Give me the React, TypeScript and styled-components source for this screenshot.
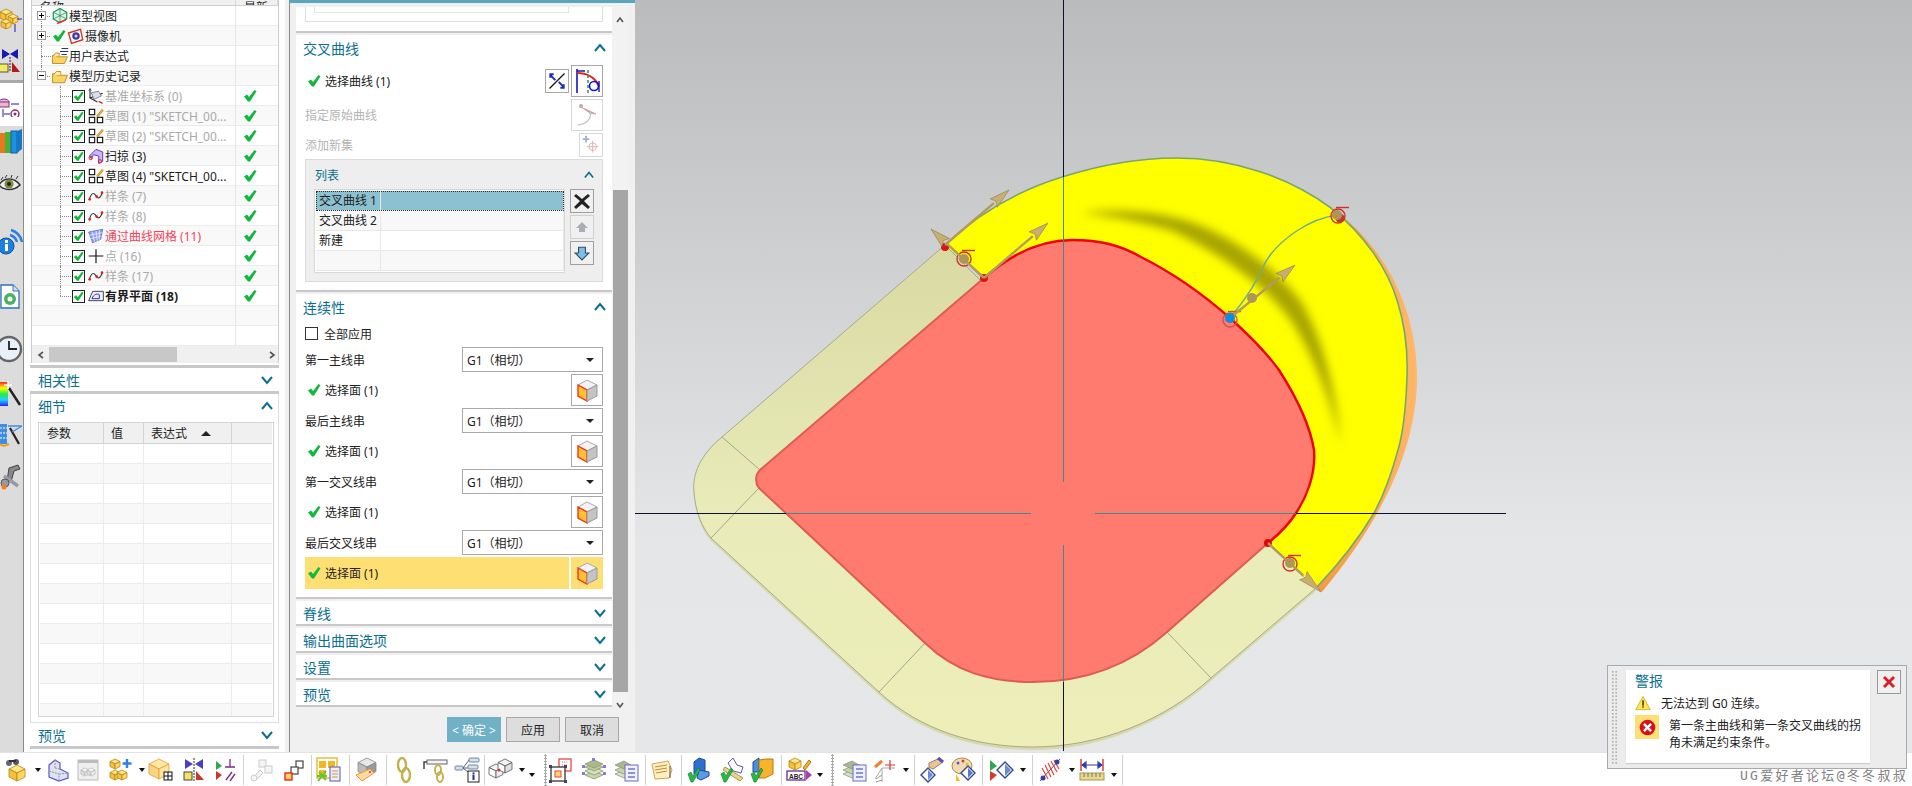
import React from "react";
import styled, { createGlobalStyle } from "styled-components";

const Global = createGlobalStyle`
  html, body { margin: 0; padding: 0; overflow: hidden; background: #fff; }
  * { box-sizing: border-box; }
  #root { font-family: "Noto Sans", "Noto Sans CJK SC", sans-serif; font-size: 12px; color: #222; }
`;

const TEAL = "#0b6f8f";

const Root = styled.div`
  position: relative; width: 1912px; height: 786px; display: flex; flex-direction: column; overflow: hidden;
`;
const Main = styled.div`display: flex; height: 752px;`;

/* ---------- icon base ---------- */
const Svg = styled.svg<{ $s?: number }>`
  display: block; flex: none; width: ${p => p.$s ?? 24}px; height: ${p => p.$s ?? 24}px;
`;
const Ic: React.FC<{ s?: number; v?: string; children?: React.ReactNode }> = ({ s = 24, v, children }) => (
  <Svg $s={s} viewBox={v ?? (s > 24 ? `0 0 ${s} ${s}` : "0 0 24 24")}>{children}</Svg>
);
const Cube: React.FC<{ x: number; y: number; r: number; t?: string; l?: string; f?: string; st?: string }> = ({ x, y, r, t = "#ffe680", l = "#f6c03c", f = "#ffd75e", st = "#b5851a" }) => (
  <g stroke={st} strokeWidth="0.8" strokeLinejoin="round">
    <path fill={t} d={`M${x} ${y - r}L${x + r} ${y - r / 2}L${x} ${y}L${x - r} ${y - r / 2}Z`} />
    <path fill={l} d={`M${x - r} ${y - r / 2}L${x} ${y}L${x} ${y + r}L${x - r} ${y + r / 2}Z`} />
    <path fill={f} d={`M${x + r} ${y - r / 2}L${x} ${y}L${x} ${y + r}L${x + r} ${y + r / 2}Z`} />
  </g>
);
const Tick = () => <path fill="#12b83c" d="M1 7.5L4 5.5L6 8L11.5 1L13.5 2.2L7 12.5H5Z" />;
const CheckMark = () => <Ic s={14} v="0 0 14 14"><Tick /></Ic>;

/* ---------- tree icons ---------- */
const IcModelView = () => <Ic s={18}><path d="M12 2L21 7V16L12 21L3 16V7Z" fill="#dff3e6" stroke="#14905a" strokeWidth="1.6" /><path d="M12 2V21M3 7L21 16M21 7L3 16" stroke="#14905a" /><path d="M8 22L20 17" stroke="#e33" strokeWidth="2" /></Ic>;
const IcCamera = () => <Ic s={18}><path d="M2 8L18 3L21 17L6 22Z" fill="#fff" stroke="#d8301c" strokeWidth="1.8" /><circle cx="12" cy="12" r="5" fill="#3a3aa8" /><circle cx="12" cy="12" r="2" fill="#ddd" /></Ic>;
const IcFolder = () => <Ic s={18}><path d="M2 9V21H18L22 11H8L6 9Z" fill="#fbd35f" stroke="#a87a10" /><path d="M3 11L7 6H13V10" fill="#ffe9a4" stroke="#a87a10" /></Ic>;
const IcFolderExpr = () => <Ic s={18}><path d="M2 11V22H18L22 13H8L6 11Z" fill="#fbd35f" stroke="#a87a10" /><path d="M3 12L6 8H11V12" fill="#ffe9a4" stroke="#a87a10" /><path d="M14 2H23M12 6H23M14 10H21" stroke="#2430a0" strokeWidth="1.6" /></Ic>;
const IcDatum = () => <Ic s={16}><path d="M3 1V15L14 21M3 15L22 8" stroke="#222" strokeWidth="1.6" fill="none" /><path d="M5 7L16 5L20 12L9 17Z" fill="#dde" stroke="#555" /><path d="M3 1L1 4M3 1L5 4" stroke="#22a" /><path d="M16 20L22 23" stroke="#d22" strokeWidth="2" /></Ic>;
const IcSketch = () => <Ic s={16}><rect x="2" y="2" width="8" height="8" fill="#fff" stroke="#111" strokeWidth="1.7" /><rect x="2" y="14" width="8" height="8" fill="#fff" stroke="#111" strokeWidth="1.7" /><rect x="14" y="14" width="8" height="8" fill="#fff" stroke="#111" strokeWidth="1.7" /><path d="M13 12L21 2L23 4L15 13Z" fill="#f2b632" stroke="#a87a10" /></Ic>;
const IcSweep = () => <Ic s={16}><path d="M2 12L12 2L22 6V20L16 23V12L8 10L5 16Z" fill="#c9b8f2" stroke="#5a3ed0" strokeWidth="1.5" /><circle cx="4" cy="15" r="2.5" fill="none" stroke="#e22" strokeWidth="1.5" /><circle cx="18" cy="20" r="2.5" fill="none" stroke="#e22" strokeWidth="1.5" /></Ic>;
const IcSpline = () => <Ic s={16}><path d="M2 17C6 4 10 8 13 13S20 12 22 6" fill="none" stroke="#333" strokeWidth="1.7" /><circle cx="2.5" cy="17" r="2" fill="#d22" /><circle cx="13" cy="13" r="2" fill="#d22" /><circle cx="21" cy="7" r="2" fill="#d22" /></Ic>;
const IcMesh = () => <Ic s={16}><path d="M1 6L22 2L19 17L7 22Z" fill="#8fa2ef" stroke="#3c50c8" /><path d="M6 5L10 21M12 4L14 20M17 3L17 18M2 11L21 7M4 16L20 12" stroke="#fff" /></Ic>;
const IcPoint = () => <Ic s={16}><path d="M12 2V23M1 12H23" stroke="#111" strokeWidth="1.7" /></Ic>;
const IcPlane = () => <Ic s={16}><path d="M1 19L7 5H23V19Z" fill="#eef" stroke="#445" strokeWidth="1.5" /><path d="M6 16C8 9 15 8 17 10V16Z" fill="none" stroke="#33a" strokeWidth="1.5" /></Ic>;

/* ---------- navigator ---------- */
const Rail = styled.div`
  width: 24px; flex: none; background: #dcdcdc; border-right: 1px solid #8c8c8c; overflow: hidden;
  display: flex; flex-direction: column;
`;
const RailItem = styled.div<{ $h: number; $on?: boolean }>`
  height: ${p => p.$h}px; flex: none; display: flex; align-items: center; margin-left: ${p => (p.$on ? "0" : "-6px")};
  background: ${p => (p.$on ? "#fff" : "transparent")};
`;
const RailRule = styled.div`height: 3px; flex: none; background: #a8a8a8;`;

const Nav = styled.div`width: 261px; flex: none; background: #fff; padding-left: 7px; display: flex; flex-direction: column;`;
const TreeBox = styled.div`width: 248px; height: 363px; flex: none; border: 1px solid #ccc; border-top: 0; display: flex; flex-direction: column;`;
const TreeHead = styled.div`
  height: 6px; flex: none; display: grid; grid-template-columns: 204px 1fr; background: #f0f0f0; overflow: hidden;
  border-bottom: 1px solid #d0d0d0; font-size: 12px;
`;
const HeadCell = styled.div`display: flex; align-items: flex-end; padding-left: 8px; line-height: 16px; border-right: 1px solid #d8d8d8; & > span { display: block; }`;
const TreeRow = styled.div<{ $alt: boolean }>`
  height: 20px; flex: none; display: grid; grid-template-columns: 204px 1fr; border-bottom: 1px solid #ececec;
  background: ${p => (p.$alt ? "#f9f9f9" : "#fff")};
`;
const TreeMain = styled.div`display: flex; align-items: center; border-right: 1px solid #e6e6e6; min-width: 0; white-space: nowrap; height: 20px;`;
const TreeFlag = styled.div`display: flex; align-items: center; padding-left: 7px;`;
const Guide = styled.div<{ $w: number; $x: number; $end?: boolean; $h?: number }>`
  position: relative; flex: none; width: ${p => p.$w}px; height: 20px;
  &::before { content: ""; position: absolute; left: ${p => p.$x}px; top: 0; height: ${p => (p.$end ? "10px" : "20px")}; border-left: 1px dotted #888; }
  &::after { content: ""; position: absolute; left: ${p => p.$x}px; top: 10px; width: ${p => p.$h ?? 0}px; border-top: 1px dotted #888; }
`;
const Expander = styled.span`
  position: absolute; left: 5px; top: 5px; width: 9px; height: 9px; border: 1px solid #999; background: #fff; z-index: 1;
  &::before { content: ""; position: absolute; left: 1px; top: 3px; width: 5px; height: 1px; background: #000; }
`;
const Plus = styled(Expander)`
  &::after { content: ""; position: absolute; left: 3px; top: 1px; width: 1px; height: 5px; background: #000; }
`;
const CheckBox = styled.span`
  width: 13px; height: 13px; flex: none; border: 1px solid #222; background: #fff; display: flex; align-items: center; justify-content: center; margin-right: 2px;
`;
const IconSlot = styled.span<{ $w: number }>`width: ${p => p.$w}px; flex: none; display: flex; justify-content: center;`;
const TreeText = styled.span<{ $tone?: string; $bold?: boolean }>`
  font-size: 12px; font-weight: ${p => (p.$bold ? 700 : 400)};
  color: ${p => (p.$tone === "dim" ? "#a9a9a9" : p.$tone === "red" ? "#f4455c" : "#1c1c1c")};
`;
const Hscroll = styled.div`height: 17px; margin-top: auto; flex: none; background: #f0f0f0; display: flex; align-items: center; justify-content: space-between; padding: 0 2px 0 5px;`;
const HThumb = styled.div`width: 128px; height: 15px; background: #c8c8c8; margin-left: 4px; margin-right: auto;`;
const ThickRule = styled.div<{ $top?: number }>`height: 3px; flex: none; width: 249px; margin-left: -1px; margin-top: ${p => p.$top ?? 0}px; background: #c8c8c8;`;
const NavTitle = styled.div<{ $h: number }>`
  height: ${p => p.$h}px; flex: none; display: flex; align-items: center; justify-content: space-between; padding: 0 6px 0 7px;
  color: ${TEAL}; font-size: 14px; width: 248px;
`;
const DetailBox = styled.div`
  width: 249px; margin-left: -1px; height: 329px; flex: none; border: 1px solid #ddd; border-top: 0; display: flex; flex-direction: column;
`;
const ParamTable = styled.div`width: 236px; height: 295px; margin: 4px 0 0 7px; border: 1px solid #d4d4d4; padding: 0 1px; overflow: hidden; flex: none;`;
const COLS = "64px 40px 88px 41px";
const ParamHead = styled.div`height: 21px; display: grid; grid-template-columns: ${COLS}; background: #f0f0f0; border-bottom: 1px solid #d4d4d4;`;
const ParamHeadCell = styled.div`border-right: 1px solid #d4d4d4; padding-left: 7px; display: flex; align-items: center; justify-content: space-between; padding-right: 20px; &:last-child { border: 0; }`;
const ParamRow = styled.div<{ $alt: boolean }>`
  height: 20px; display: grid; grid-template-columns: ${COLS}; border-bottom: 1px solid #ececec; background: ${p => (p.$alt ? "#f8f8f8" : "#fff")};
`;
const ParamCell = styled.div`border-right: 1px solid #ececec; &:last-child { border: 0; }`;
const SortUp = styled.span`width: 0; height: 0; border-left: 5px solid transparent; border-right: 5px solid transparent; border-bottom: 5px solid #222;`;

const Chevron: React.FC<{ up?: boolean; small?: boolean }> = ({ up, small }) => (
  <Ic s={small ? 10 : 12} v="0 0 12 12">
    <path d={up ? "M1 9L6 3L11 9" : "M1 3L6 9L11 3"} fill="none" stroke={TEAL} strokeWidth="2" />
  </Ic>
);
const Arr: React.FC<{ d: string }> = ({ d }) => (
  <Ic s={8} v="0 0 8 8"><path d={d} fill="none" stroke="#555" strokeWidth="1.6" /></Ic>
);

/* ---------- dialog ---------- */
const Dialog = styled.div`width: 350px; flex: none; background: #f0f0f0; padding-left: 4px; display: flex;`;
const DialogInner = styled.div`flex: 1; border-left: 1px solid #8a8a8a; border-top: 3px solid #5aa5bd; padding: 4px 0 0 6px; display: flex; flex-direction: column;`;
const DialogBody = styled.div`display: flex; height: 700px; flex: none;`;
const Sections = styled.div`width: 316px; flex: none; display: flex; flex-direction: column; gap: 2px;`;
const Section = styled.div<{ $h?: number }>`
  background: #fff; border-bottom: 2px solid #c8c8c8; flex: none; ${p => p.$h && `height:${p.$h}px;`}
`;
const SectionTitle = styled.div<{ $h?: number }>`
  height: ${p => p.$h ?? 26}px; display: flex; align-items: center; justify-content: space-between; padding: 0 6px 0 7px; color: ${TEAL}; font-size: 14px;
`;
const SectionBody = styled.div<{ $t: number }>`padding: ${p => p.$t}px 9px 8px 9px; display: flex; flex-direction: column; gap: 2px;`;
const CutBox = styled.div`margin: 0 9px; height: 15px; border: 1px solid #ddd; border-top: 0; padding: 0 0 4px 8px;`;
const CutInner = styled.div`width: 255px; height: 6px; border: 1px solid #e4e4e4; border-top: 0;`;
const Row = styled.div<{ $h: number }>`
  height: ${p => p.$h}px; display: flex; align-items: center; justify-content: space-between;
`;
const LabelGroup = styled.div<{ $on?: boolean; $dim?: boolean; $plain?: boolean }>`
  display: flex; align-items: center; gap: ${p => (p.$plain ? 6 : 4)}px; height: 100%; flex: 1;
  padding-left: ${p => (p.$dim || p.$plain ? 0 : "2px")};
  color: ${p => (p.$dim ? "#b4b4b4" : "#222")};
  background: ${p => (p.$on ? "#fedf73" : "transparent")};
  margin-right: ${p => (p.$on ? "2px" : 0)};
`;
const IconBtn = styled.div<{ $s: number; $on?: boolean; $dim?: boolean }>`
  width: ${p => p.$s}px; height: ${p => p.$s}px; flex: none; display: flex; align-items: center; justify-content: center;
  border: 1px solid ${p => (p.$on ? "#fedf73" : p.$dim ? "#d8d8d8" : "#a8a8a8")};
  background: ${p => (p.$on ? "#fedf73" : "#fff")};
`;
const BtnPair = styled.div`display: flex; align-items: center; gap: 2px;`;
const ListGroup = styled.div`height: 123px; background: #eee; border: 1px solid #dcdcdc; padding: 0 8px;`;
const ListTitle = styled.div`height: 29px; display: flex; align-items: center; justify-content: space-between; color: ${TEAL}; font-size: 12px; & > span:first-child { padding-left: 1px; }`;
const ListWrap = styled.div`display: flex; gap: 5px;`;
const ListTable = styled.div`width: 251px; height: 84px; background: #fff; border: 1px solid #d8d8d8; padding: 1px 0 0 1px;`;
const ListRow = styled.div<{ $sel?: boolean; $alt?: boolean }>`
  height: 20px; display: grid; grid-template-columns: 65px 1fr; border-bottom: 1px solid #e8e8e8; line-height: 19px;
  background: ${p => (p.$sel ? "#8bc1d1" : p.$alt ? "#f8f8f8" : "#fff")};
  ${p => p.$sel && "outline: 1px dotted #333; outline-offset: -1px;"}
  & > span { padding-left: 3px; border-right: 1px solid #e8e8e8; white-space: nowrap; }
`;
const ListBtns = styled.div`display: flex; flex-direction: column; gap: 2px;`;
const SmallBtn = styled.div<{ $dim?: boolean }>`
  width: 24px; height: 24px; display: flex; align-items: center; justify-content: center; background: #f0f0f0;
  border: 1px solid ${p => (p.$dim ? "#d0d0d0" : "#a0a0a0")};
`;
const TickBox = styled.span`width: 13px; height: 13px; flex: none; border: 1px solid #333; background: #fff;`;
const Select = styled.div`
  width: 141px; height: 25px; border: 1px solid #aaa; background: #fff; display: flex; align-items: center; justify-content: space-between; padding: 0 8px 0 4px;
  &::after { content: ""; width: 0; height: 0; border-left: 4px solid transparent; border-right: 4px solid transparent; border-top: 4px solid #222; }
`;
const VScroll = styled.div`width: 16px; flex: none; height: 701px; display: flex; flex-direction: column; align-items: center; background: #f2f2f2; margin-top: -3px;`;
const VEnd = styled.div<{ $h: number; $at: string }>`height: ${p => p.$h}px; width: 100%; display: flex; align-items: ${p => p.$at}; padding: 12px 0 0; justify-content: center; flex: none;`;
const VThumb = styled.div`width: 15px; height: 502px; margin-left: 1px; flex: none; background: #a6a6a6;`;
const Footer = styled.div`display: flex; justify-content: flex-end; gap: 5px; padding: 10px 16px 0 0;`;
const Btn = styled.div<{ $primary?: boolean }>`
  width: 54px; height: 25px; display: flex; align-items: center; justify-content: center;
  background: ${p => (p.$primary ? "#70b1c8" : "#ddd")}; color: ${p => (p.$primary ? "#fff" : "#222")};
  border: 1px solid ${p => (p.$primary ? "#70b1c8" : "#a8a8a8")};
`;

/* dialog icons */
const IcFace = () => <Ic s={24}><path d="M12 2L22 7L12 12L3 7Z" fill="#f4f2f4" stroke="#aaa" /><path d="M3 7L12 12V23L3 18Z" fill="#ffc22e" stroke="#f0341c" strokeWidth="1.4" /><path d="M22 7L12 12V23L22 18Z" fill="#c4c4c4" stroke="#999" /></Ic>;
const IcCross = () => <Ic s={20}><path d="M3 21L21 3" stroke="#111" strokeWidth="1.5" /><path d="M4 5L10 11M8 4L4 4L4 8" stroke="#1c2db4" strokeWidth="2.4" fill="none" /><path d="M20 19L14 13M16 20H20V16" stroke="#1c2db4" strokeWidth="2.4" fill="none" /></Ic>;
const IcCurveRed = () => <Ic s={30}><path d="M5 3V27" stroke="#1414c8" strokeWidth="1.6" /><path d="M5 5H13" stroke="#1414c8" strokeWidth="1.5" /><path d="M5 7C15 7 22 10 27 20" fill="none" stroke="#e8231a" strokeWidth="2.2" /><path d="M16 4V28" stroke="#14876a" strokeDasharray="3 2" strokeWidth="1.4" /><circle cx="22" cy="20" r="4.500" fill="none" stroke="#1414c8" strokeWidth="1.6" /><path d="M27 15V26" stroke="#1414c8" strokeWidth="1.4" /></Ic>;
const IcCurveDim = () => <Ic s={26}><circle cx="7" cy="4" r="2" fill="#c9a6a6" /><path d="M7 5L22 12L15 11" fill="#c9a6a6" stroke="#c9a6a6" /><path d="M16 10C18 17 12 22 4 23" fill="none" stroke="#c8c8c8" strokeWidth="1.4" /></Ic>;
const IcAddSet = () => <Ic s={20}><path d="M2 5H10M6 1V9" stroke="#a4aed0" strokeWidth="2.2" /><circle cx="14" cy="14" r="4.5" fill="none" stroke="#d8a8a0" /><path d="M14 7V21M7 14H21" stroke="#d8a8a0" /></Ic>;
const IcX = () => <Ic s={18} v="0 0 18 18"><path d="M3 2L9 7L15 2L17 4L11 9L17 15L15 17L9 12L3 17L1 15L7 9L1 4Z" fill="#222" /></Ic>;
const IcUp = () => <Ic s={14} v="0 0 14 14"><path d="M7 2L13 8H10V12H4V8H1Z" fill="#a8b0b4" /></Ic>;
const IcDown = () => <Ic s={16} v="0 0 14 14"><path d="M4 2H10V7H13L7 13L1 7H4Z" fill="#7cc0e4" stroke="#3a4a6c" /></Ic>;

/* ---------- viewport ---------- */
const Viewport = styled.div`
  flex: 1; min-width: 0; background: linear-gradient(180deg, #b9bbbc 0%, #d2d3d4 40%, #e5e6e8 72%, #e6e7e9 100%);
`;
const Scene = styled.svg`display: block; width: 1277px; height: 752px;`;

const OUTER = "M945 245C980 212 1020 190 1062 177C1100 165 1140 158 1176 158C1235 158 1290 178 1331 208C1365 235 1388 270 1397 300C1405 325 1408 350 1407 377C1406 405 1404 430 1398 450C1392 472 1384 495 1374 513C1358 540 1338 565 1316 588";
const RED_CURVE = "M984 278C1010 255 1040 240 1072 240C1100 240 1120 245 1141 257C1175 274 1205 296 1230 318C1250 336 1266 352 1279 370C1295 395 1310 425 1314 450C1316 475 1306 498 1296 513C1288 526 1278 535 1268 543";
const RED_BACK = "C1278 535 1288 526 1296 513C1306 498 1316 475 1314 450C1310 425 1295 395 1279 370C1266 352 1250 336 1230 318C1205 296 1175 274 1141 257C1120 245 1100 240 1072 240C1040 240 1010 255 984 278Z";
const RED_REST = "L1167 632C1130 665 1085 682 1033 682C990 682 955 672 925 643L759 488C755 483 755 475 760 470Z";
const PALE = "M945 245L722 437C700 455 692 475 694 492C695 510 702 528 711 538L879 692C920 730 975 747 1033 747C1100 747 1165 720 1211 678L1316 588L1000 300Z";

const Arrow: React.FC<{ a: number[]; b: number[]; head?: number }> = ({ a, b, head = 20 }) => {
  const dx = b[0] - a[0], dy = b[1] - a[1], len = Math.hypot(dx, dy), ux = dx / len, uy = dy / len;
  const bx = b[0] - ux * head, by = b[1] - uy * head;
  return (
    <g>
      <path d={`M${a[0]} ${a[1]}L${bx} ${by}`} stroke="#b39a5e" strokeWidth="2.4" />
      <path d={`M${b[0]} ${b[1]}L${bx - uy * 5.5} ${by + ux * 5.5}L${bx + ux * 3} ${by + uy * 3}L${bx + uy * 5.5} ${by - ux * 5.5}Z`} fill="#c8ae70" stroke="#8f7a48" strokeWidth="0.6" />
    </g>
  );
};
const Handle: React.FC<{ x: number; y: number; c?: string }> = ({ x, y, c = "#cf2f2f" }) => (
  <g>
    <circle cx={x} cy={y} r="7" fill="none" stroke={c} strokeWidth="1.4" />
    <path d={`M${x - 2} ${y - 8.5}H${x + 11}`} stroke={c} strokeWidth="1.4" />
  </g>
);
const Ball: React.FC<{ x: number; y: number; r?: number; c?: string }> = ({ x, y, r = 5, c = "#ae9558" }) => <circle cx={x} cy={y} r={r} fill={c} />;

const SceneArt = () => (
  <Scene viewBox="635 0 1277 752">
    <defs>
      <linearGradient id="pale" x1="0" y1="0" x2="0" y2="1"><stop offset="0" stopColor="#d9d9a2" /><stop offset="0.55" stopColor="#e9ecb9" /><stop offset="1" stopColor="#edeeb8" /></linearGradient>
      <linearGradient id="rim" x1="0" y1="0" x2="1" y2="0"><stop offset="0" stopColor="#f29a45" /><stop offset="1" stopColor="#ffb766" /></linearGradient>
      <filter id="blur" x="-30%" y="-30%" width="160%" height="160%"><feGaussianBlur stdDeviation="5" /></filter>
      <clipPath id="yc"><path d={`${OUTER}L1268 543${RED_BACK}`} /></clipPath>
    </defs>
    <path d={PALE} fill="#d8d9a8" transform="translate(0 3)" />
    <path d={PALE} fill="url(#pale)" stroke="#a9a98e" strokeWidth="1" />
    <path d="M722 437L760 470M759 488L711 538M925 643L879 692M1167 632L1211 678" stroke="#a3a58e" strokeWidth="1" fill="none" />
    <path d="M1331 208C1385 245 1417 310 1417 377C1417 440 1390 510 1322 592L1316 588L1340 400Z" fill="url(#rim)" />
    <path d={`${OUTER}L1268 543${RED_BACK}`} fill="#ffff00" />
    <g clipPath="url(#yc)">
      <path d="M1080 213C1120 208 1155 212 1185 220C1225 232 1270 262 1300 300C1322 335 1336 390 1341 445C1332 405 1316 360 1292 322C1270 292 1235 262 1175 232C1145 222 1110 216 1080 213Z" fill="#a8a400" filter="url(#blur)" />
    </g>
    <path d={OUTER} fill="none" stroke="#7ba56e" strokeWidth="1.6" />
    <path d={`${RED_CURVE}${RED_REST}`} fill="#ff7b6f" />
    <path d="M1268 543L1167 632C1130 665 1085 682 1033 682C990 682 955 672 925 643L759 488C755 483 755 475 760 470L984 278" fill="none" stroke="#dc5c54" strokeWidth="2" />
    <path d={RED_CURVE} fill="none" stroke="#f20000" strokeWidth="2.4" />
    {/* crosshair */}
    <path d="M1063.5 0V751" stroke="#101030" strokeWidth="1" />
    <path d="M635 513.5H1506" stroke="#101030" strokeWidth="1" />
    <rect x="1031" y="482" width="64" height="63" fill="#ff7b6f" />
    <path d="M1063.5 177V482M1063.5 545V682" stroke="#3f8c8c" strokeWidth="1" />
    <path d="M786 513.5H1031M1095 513.5H1296" stroke="#3f8c8c" strokeWidth="1" />
    {/* green guide */}
    <path d="M1230 318C1245 300 1258 280 1265 263C1278 240 1310 218 1338 215" fill="none" stroke="#6fae8a" strokeWidth="1.5" />
    {/* handles */}
    <Handle x={964} y={259} />
    <Handle x={1230} y={320} c="#d05050" />
    <Handle x={1338} y={216} />
    <Handle x={1290} y={564} />
    <circle cx="945" cy="247" r="4" fill="#d81414" />
    <circle cx="984" cy="278" r="4" fill="#d81414" />
    <circle cx="1268" cy="543" r="4" fill="#e80000" />
    <circle cx="1340" cy="218" r="4.500" fill="#c0392b" />
    <Arrow a={[945, 245]} b={[1009, 190]} />
    <Arrow a={[984, 278]} b={[1048, 223]} />
    <Arrow a={[984, 278]} b={[931, 229]} />
    <Arrow a={[1230, 318]} b={[1295, 265]} />
    <Arrow a={[1268, 543]} b={[1321, 592]} head={24} />
    <Ball x={964} y={259} />
    <Ball x={1252} y={298} />
    <Ball x={1337} y={215} />
    <Ball x={1290} y={563} />
    <circle cx="1230" cy="318" r="5" fill="#0a8fe0" />
  </Scene>
);

/* ---------- alert ---------- */
const Alert = styled.div`
  position: absolute; left: 1607px; top: 665px; width: 300px; height: 104px; background: #ececec; border: 1px solid #aaa;
  display: flex; padding: 4px 5px 4px 3px;
`;
const Grip = styled.div`
  width: 7px; flex: none; margin-right: 8px; background-image: radial-gradient(#b4b4b4 1.1px, transparent 1.2px); background-size: 3.5px 3.5px;
`;
const AlertCard = styled.div`width: 244px; height: 93px; background: #fff; padding: 2px 0 0 9px; box-shadow: 0 1px 1px #ccc; flex: none;`;
const AlertTitle = styled.div`color: ${TEAL}; font-size: 14px; line-height: 18px; margin-bottom: 3px;`;
const AlertLine = styled.div`display: flex; align-items: center; gap: 10px; height: 20px; margin-bottom: 2px;`;
const AlertError = styled.div`display: flex; gap: 10px; align-items: flex-start;`;
const ErrBadge = styled.div`width: 24px; height: 24px; flex: none; background: #fedf73; display: flex; align-items: center; justify-content: center;`;
const ErrText = styled.div`line-height: 17px; padding-top: 2px; width: 196px;`;
const CloseBtn = styled.div`width: 24px; height: 24px; margin-left: 7px; border: 1px solid #999; display: flex; align-items: center; justify-content: center; background: #f0f0f0; flex: none;`;
const Watermark = styled.div`
  position: absolute; right: 4px; bottom: 2px; font-family: "DejaVu Sans Mono", "Noto Sans CJK SC", monospace; font-size: 13px; line-height: 16px; color: #808080; letter-spacing: 2.3px; white-space: nowrap;
`;

/* ---------- toolbar ---------- */
const Toolbar = styled.div`height: 34px; flex: none; background: #fff; border-top: 1px solid #e4e4e4; display: flex; align-items: center;`;
const ToolSlot = styled.div<{ $w: number; $ml: number }>`
  width: ${p => p.$w}px; margin-left: ${p => p.$ml}px; flex: none; display: flex; align-items: center; justify-content: center;
`;
const Caret = styled.span<{ $low?: boolean }>`
  width: 0; height: 0; border-left: 3.5px solid transparent; border-right: 3.5px solid transparent; border-top: 4px solid #111;
  margin-top: ${p => (p.$low ? "10px" : "0")};
`;
const Sep = styled.span`width: 1px; height: 30px; background: #d0d0d0;`;
const DotSep = styled.span`width: 3px; height: 32px; background-image: radial-gradient(#aaa 1px, transparent 1.1px); background-size: 3px 3px;`;

const Y = "#ffd75e";
function IcLayers() {
  return <Ic s={26}><g stroke="#8a9a6a" strokeWidth="0.8"><path d="M4 18L13 14L22 18L13 22Z" fill="#c8d4b0" /><path d="M4 14L13 10L22 14L13 18Z" fill="#d8e0c4" /><path d="M4 10L13 6L22 10L13 14Z" fill="#bccaa0" /><path d="M4 7L13 3L22 7L13 11Z" fill="#aab890" /></g><g fill="#8a7ad8"><rect x="1" y="8" width="3" height="3" /><rect x="22" y="8" width="3" height="3" /><rect x="11" y="1" width="3" height="3" /><rect x="1" y="15" width="3" height="3" /><rect x="22" y="15" width="3" height="3" /></g></Ic>;
}
function IcLayersList() {
  return <Ic s={26}><g stroke="#8a9a7a" strokeWidth="0.8"><path d="M2 17L11 13L18 17L11 21Z" fill="#d8e0c4" /><path d="M2 13L11 9L18 13L11 17Z" fill="#c8d4b0" /><path d="M2 8L11 4L18 8L11 12Z" fill="#aab890" /></g><rect x="12" y="8" width="13" height="16" fill="#f0f0ff" stroke="#6a6ac8" /><path d="M15 12H22M15 16H22M15 20H22" stroke="#6a7ac8" strokeWidth="1.400" /></Ic>;
}
const tools: { c: number; n: React.ReactNode; w?: number }[] = [
  { c: 16, n: <Ic><Cube x={13} y={15} r={8} /><circle cx="5" cy="5" r="3" fill="#667" /><circle cx="12" cy="4" r="3" fill="#556" /><path d="M5 3H12" stroke="#333" strokeWidth="2" /></Ic> },
  { c: 38, w: 7, n: <Caret /> },
  { c: 58, n: <Ic><path d="M3 7L9 2L14 5V11L22 15V20L13 23L3 19Z" fill="#dfe2f2" stroke="#5a55c8" strokeWidth="1.2" /><path d="M3 13L13 16V23M13 16L22 15M9 2V10M9 10L14 11" stroke="#999" strokeDasharray="2 1" fill="none" /></Ic> },
  { c: 88, n: <Ic><rect x="2" y="2" width="20" height="20" fill="#eee" stroke="#bbb" /><rect x="2" y="2" width="20" height="3" fill="#bbb" /><Cube x={9} y={14} r={4} t="#f8f8f8" l="#ddd" f="#eee" st="#bbb" /><Cube x={15} y={14} r={4} t="#f8f8f8" l="#ddd" f="#eee" st="#bbb" /></Ic> },
  { c: 120, n: <Ic><Cube x={7} y={6} r={5} /><Cube x={7} y={17} r={5} /><Cube x={14} y={17} r={5} /><path d="M19 1V10M14.5 5.5H23.500" stroke="#2f7fe8" strokeWidth="2.4" /></Ic> },
  { c: 142, w: 7, n: <Caret /> },
  { c: 161, n: <Ic s={26}><Cube x={11} y={12} r={10} t="#ffe9a8" l="#f7d682" f="#ffe6a0" st="#e39c30" /><rect x="16" y="15" width="8" height="8" fill="#fff" stroke="#111" /><path d="M20 15V23M16 19H24" stroke="#111" /></Ic> },
  { c: 194, n: <Ic><path d="M3 1L11 6L3 11ZM21 1L13 6L21 11Z" fill="#4c3fc4" /><path d="M12 0V24" stroke="#333" strokeDasharray="2 1" /><rect x="2" y="14" width="8" height="8" fill="#f4e45c" stroke="#444" /><path d="M14 13L22 22H14Z" fill="#c8382c" /></Ic> },
  { c: 224, n: <Ic><path d="M4 3L10 8L4 12Z" fill="#2fa84f" /><path d="M4 13L10 17L4 22Z" fill="#c8382c" /><path d="M13 9H23M18 9V1M14 22L20 14M18 23L23 16" stroke="#7a2a86" strokeWidth="1.3" /></Ic> },
  { c: 243, w: 1, n: <Sep /> },
  { c: 261, n: <Ic><g fill="#f4f4f4" stroke="#ccc"><rect x="10" y="2" width="7" height="7" /><rect x="16" y="8" width="7" height="7" /><path d="M4 20L11 12L14 15L7 22Z" /><circle cx="5" cy="20" r="3" /></g></Ic> },
  { c: 294, n: <Ic><rect x="14" y="3" width="7" height="7" fill="#fff" stroke="#444" strokeWidth="1.2" /><rect x="9" y="9" width="7" height="7" fill="#fff" stroke="#444" strokeWidth="1.2" /><rect x="3" y="15" width="7" height="7" fill={Y} stroke="#e22" strokeWidth="1.4" /></Ic> },
  { c: 311, w: 1, n: <Sep /> },
  { c: 329, n: <Ic s={26}><rect x="1" y="1" width="20" height="20" fill="#fff" stroke="#e6b82c" strokeWidth="1.4" /><rect x="3" y="4" width="7" height="7" fill="#f0b828" /><rect x="12" y="4" width="7" height="7" fill="#f0b828" /><rect x="3" y="13" width="7" height="7" fill="#f0b828" /><path d="M2 24L10 14M3 15L10 23M1 19H11" stroke="#6ac42c" strokeWidth="2" /><rect x="14" y="10" width="10" height="14" fill="#eef" stroke="#5a55a8" /><path d="M16 14H22M16 17H22M16 20H22" stroke="#c8a028" /></Ic> },
  { c: 349, w: 1, n: <Sep /> },
  { c: 367, n: <Ic s={26}><Cube x={13} y={10} r={9} t="#e8e8e8" l="#bbb" f="#999" st="#888" /><path d="M2 18L16 12L20 16L8 24Z" fill="#ffd9a0" stroke="#e89a30" /><circle cx="16" cy="15" r="1" fill="#e22" /></Ic> },
  { c: 386, w: 1, n: <Sep /> },
  { c: 404, n: <Ic s={28}><g fill="none" stroke="#c4b04c" strokeWidth="2.4"><ellipse cx="12" cy="9" rx="4" ry="7" /><ellipse cx="16" cy="19" rx="4" ry="7" /></g></Ic> },
  { c: 435, n: <Ic s={28}><rect x="6" y="4" width="20" height="4" fill="#f4f4f4" stroke="#666" /><path d="M6 6H3V13" stroke="#444" strokeWidth="1.5" fill="none" /><g fill="none" stroke="#c4b04c" strokeWidth="2"><ellipse cx="17" cy="14" rx="3" ry="5" /><ellipse cx="19" cy="21" rx="3" ry="5" /></g></Ic> },
  { c: 467, n: <Ic s={26}><rect x="15" y="1" width="10" height="4" rx="1" fill="#cfe0f4" stroke="#789" /><rect x="14" y="8" width="10" height="4" rx="1" fill="#cfe0f4" stroke="#789" /><rect x="1" y="9" width="8" height="4" rx="1" fill="#cfe0f4" stroke="#789" /><path d="M9 11H14M9 11L15 3M9 11L14 15" stroke="#567" /><rect x="14" y="14" width="11" height="11" fill="#fff" stroke="#222" /><rect x="18.500" y="18" width="2" height="5" fill="#2a2a90" /><rect x="18.500" y="15.500" width="2" height="2" fill="#2a2a90" /></Ic> },
  { c: 484, w: 1, n: <Sep /> },
  { c: 501, n: <Ic s={26}><Cube x={8} y={14} r={7} t="#f4f4f4" l="#fff" f="#eee" st="#555" /><Cube x={17} y={9} r={7} t="#f4f4f4" l="#fff" f="#e0e0e0" st="#555" /><circle cx="11" cy="13" r="1.500" fill="#d33" /></Ic> },
  { c: 522, w: 7, n: <Caret /> },
  { c: 532, w: 7, n: <Caret $low /> },
  { c: 545, w: 3, n: <DotSep /> },
  { c: 561, n: <Ic s={26}><rect x="11" y="2" width="12" height="12" fill="#fff" stroke="#e44" strokeWidth="1.3" /><path d="M14 5H20M14 8H20M14 11H20" stroke="#999" strokeDasharray="1 1" /><rect x="3" y="10" width="14" height="14" fill="#fff" stroke="#333" strokeWidth="1.3" /><rect x="7" y="14" width="6" height="6" fill={Y} stroke="#e44" /><g fill="#445"><rect x="1" y="8" width="3" height="3" /><rect x="16" y="8" width="3" height="3" /><rect x="1" y="23" width="3" height="3" /><rect x="16" y="23" width="3" height="3" /></g></Ic> },
  { c: 594, n: <IcLayers /> },
  { c: 626, n: <IcLayersList /> },
  { c: 645, w: 1, n: <Sep /> },
  { c: 662, n: <Ic><path d="M2 6L18 3L22 12L19 20L5 21Z" fill="#fff0c0" stroke="#d8a050" /><path d="M5 9L17 7M5 12L17 10M6 15L17 13" stroke="#c08830" /><path d="M20 8V20" stroke="#555" /></Ic> },
  { c: 681, w: 1, n: <Sep /> },
  { c: 699, n: <Ic s={26}><path d="M8 5L13 1L19 3V15L13 17H8Z" fill="#2f6fd0" stroke="#1c4898" /><path d="M13 13L23 15V19L15 23L11 21Z" fill="#5a9ae8" stroke="#1c4898" /><path d="M2 17L5 15L7 19L12 11L14 13L7 25H5Z" fill="#28b848" stroke="#0c7a2a" strokeWidth="0.6" /></Ic> },
  { c: 732, n: <Ic s={26}><path d="M9 6L14 1L18 8L24 10L22 16L14 14Z" fill="#fff" stroke="#5a55c8" /><path d="M6 10L24 21L21 24L4 13Z" fill="#e8d48c" stroke="#a89850" /><path d="M2 17L5 15L7 19L12 11L14 13L7 25H5Z" fill="#28b848" stroke="#0c7a2a" strokeWidth="0.6" /></Ic> },
  { c: 762, n: <Ic s={26}><path d="M4 5L10 1V15H4Z" fill="#4a90e0" stroke="#1c4898" /><path d="M10 3L17 2H24V17L16 21H10Z" fill="#f6b32c" stroke="#b87a10" /><path d="M2 17L5 15L7 19L12 11L14 13L7 25H5Z" fill="#28b848" stroke="#0c7a2a" strokeWidth="0.6" /></Ic> },
  { c: 781, w: 1, n: <Sep /> },
  { c: 799, n: <Ic s={26}><Cube x={9} y={7} r={6} /><path d="M17 11L23 3L25 5L19 13Z" fill="#f6b32c" stroke="#a87a10" /><rect x="1" y="14" width="18" height="9" fill="#fff" stroke="#6a2a96" strokeWidth="1.300" /><text x="10" y="21.500" textAnchor="middle" fontSize="6.500" fontWeight="700" fontFamily="Liberation Sans" fill="#222">ABC</text><path d="M20 13L26 18L20 23Z" fill="#b13ca8" /></Ic> },
  { c: 820, w: 7, n: <Caret $low /> },
  { c: 832, w: 3, n: <DotSep /> },
  { c: 854, n: <IcLayersList /> },
  { c: 885, n: <Ic s={26}><path d="M10 11V25M10 11H23M10 11L3 22" stroke="#aaa" strokeWidth="1" /><path d="M13 8H23M18 3V13" stroke="#d33" strokeWidth="1.200" /><path d="M3 10L10 4" stroke="#f08030" strokeWidth="3" /><path d="M4 22L10 18M4 25L10 23" stroke="#999" /></Ic> },
  { c: 906, w: 7, n: <Caret /> },
  { c: 914, w: 1, n: <Sep /> },
  { c: 932, n: <Ic s={26}><path d="M10 6L21 1L24 5L14 12L10 10Z" fill="#e8c49a" stroke="#a87a50" /><path d="M19 1L24 5" stroke="#5a4ac0" strokeWidth="3" /><path d="M9 11L16 18L9 25L2 18Z" fill="#fff" stroke="#2f4a90" strokeWidth="1.400" /><path d="M9 13L14 18L9 23Z" fill="#6a8ad8" /></Ic> },
  { c: 964, n: <Ic s={26}><ellipse cx="11" cy="9" rx="10" ry="8" fill="#f4dcb0" stroke="#a88850" /><circle cx="7" cy="6" r="1.500" fill="#3a6ad8" /><circle cx="12" cy="4" r="1.500" fill="#d83a3a" /><circle cx="16" cy="7" r="1.500" fill="#f0c020" /><path d="M17 9L24 16L17 23L10 16Z" fill="#fff" stroke="#2f4a90" strokeWidth="1.400" /><path d="M17 11L22 16L17 21Z" fill="#5a7ac8" /><path d="M5 17L9 24H5Z" fill="#f0c020" /></Ic> },
  { c: 982, w: 1, n: <Sep /> },
  { c: 1001, n: <Ic s={26}><path d="M2 3L9 9L2 14Z" fill="#2fa84f" /><path d="M2 14L9 18L2 24Z" fill="#d8382c" /><path d="M17 5L25 13L17 21L9 13Z" fill="#fff" stroke="#2f4a90" strokeWidth="1.400" /><path d="M17 7L23 13L17 19Z" fill="#6a8ad8" /></Ic> },
  { c: 1023, w: 7, n: <Caret /> },
  { c: 1032, w: 1, n: <Sep /> },
  { c: 1050, n: <Ic s={26}><path d="M3 24L23 2" stroke="#555" /><path d="M8 8L14 20M11 6L17 18M14 4L20 15M5 11L11 22M17 3L22 12" stroke="#e0423a" strokeWidth="1.200" /><circle cx="6" cy="21" r="2.500" fill="#3a3ab0" /><circle cx="20" cy="5" r="2.500" fill="#3a3ab0" /></Ic> },
  { c: 1072, w: 7, n: <Caret /> },
  { c: 1092, n: <Ic s={26}><path d="M2 2V14M24 2V14" stroke="#d8322a" strokeWidth="1.400" /><path d="M3 8H23M3 8L7 5V11ZM23 8L19 5V11Z" stroke="#2f3fb0" strokeWidth="1.200" fill="#2f3fb0" /><rect x="1" y="16" width="24" height="7" fill="#e8d88c" stroke="#a89850" /><path d="M5 16V20M9 16V20M13 16V20M17 16V20M21 16V20" stroke="#776" /></Ic> },
  { c: 1114, w: 7, n: <Caret $low /> },
  { c: 1122, w: 1, n: <Sep /> },
];

/* ---------- data ---------- */
type TreeItem = { icon: React.ReactNode; text: string; tone?: string; bold?: boolean };
const history: TreeItem[] = [
  { icon: <IcDatum />, text: "基准坐标系 (0)", tone: "dim" },
  { icon: <IcSketch />, text: "草图 (1) \"SKETCH_00...", tone: "dim" },
  { icon: <IcSketch />, text: "草图 (2) \"SKETCH_00...", tone: "dim" },
  { icon: <IcSweep />, text: "扫掠 (3)" },
  { icon: <IcSketch />, text: "草图 (4) \"SKETCH_00..." },
  { icon: <IcSpline />, text: "样条 (7)", tone: "dim" },
  { icon: <IcSpline />, text: "样条 (8)", tone: "dim" },
  { icon: <IcMesh />, text: "通过曲线网格 (11)", tone: "red" },
  { icon: <IcPoint />, text: "点 (16)", tone: "dim" },
  { icon: <IcSpline />, text: "样条 (17)", tone: "dim" },
  { icon: <IcPlane />, text: "有界平面 (18)", bold: true },
];
const continuity = ["第一主线串", "最后主线串", "第一交叉线串", "最后交叉线串"];
const closed = ["脊线", "输出曲面选项", "设置", "预览"];

const App: React.FC = () => {
  let end = 0;
  return (
    <Root>
      <Global />
      <Main>
        <Rail>
          <RailItem $h={40}><Ic s={28}><Cube x={12} y={9} r={6} /><Cube x={19} y={13} r={5} /><Cube x={12} y={18} r={5} /><path d="M23 13H29M21 18V26" stroke="#1a1ab0" /></Ic></RailItem>
          <RailItem $h={40}><Ic s={28}><path d="M8 3L16 8L8 13ZM24 3L16 8L24 13Z" fill="#1a1ab0" /><path d="M16 11V26" stroke="#222" strokeDasharray="2 1" /><rect x="5" y="18" width="9" height="8" fill="#f4ec5c" stroke="#555" /><path d="M18 16L26 26H18Z" fill="#b81818" /></Ic></RailItem>
          <RailRule />
          <RailItem $h={43} $on><Ic s={24} v="0 0 24 24"><ellipse cx="4" cy="9" rx="5" ry="3" fill="#e4b8d0" stroke="#8a2a7a" /><rect x="-1" y="9" width="10" height="5" fill="#e4b8d0" stroke="#8a2a7a" /><path d="M11 11H19M3 16V26M4 21H10" stroke="#1a1ab0" /><circle cx="15" cy="21" r="4" fill="none" stroke="#8a2a7a" strokeWidth="1.400" /><circle cx="15" cy="21" r="1.500" fill="#8a2a7a" /></Ic></RailItem>
          <RailItem $h={30}><Ic s={28}><rect x="4" y="6" width="7" height="20" fill="#e8791c" /><rect x="11" y="5" width="6" height="21" fill="#4cb034" /><rect x="17" y="4" width="6" height="22" fill="#1e90e0" stroke="#1060a0" /><path d="M23 4L28 2V22L23 26Z" fill="#1478c8" /></Ic></RailItem>
          <RailItem $h={57}><Ic s={28}><path d="M5 14C10 6 20 6 26 14C20 20 10 20 5 14Z" fill="#eee" stroke="#333" strokeWidth="1.500" /><circle cx="15" cy="13" r="4.500" fill="#7a8a3a" /><circle cx="15" cy="13" r="2" fill="#222" /><path d="M7 9L9 6M11 7L13 4M17 7L18 4M22 8L24 5" stroke="#333" /></Ic></RailItem>
          <RailItem $h={56}><Ic s={30}><circle cx="12" cy="20" r="8" fill="#1e7fe0" stroke="#0c50a0" /><rect x="11" y="18" width="3" height="7" fill="#fff" /><rect x="11" y="14" width="3" height="3" fill="#fff" /><path d="M16 9A10 10 0 0 1 23 16M17 4A16 16 0 0 1 28 16" fill="none" stroke="#2f7ee0" strokeWidth="2.400" /></Ic></RailItem>
          <RailItem $h={54}><Ic s={28}><path d="M7 3H19L25 9V26H7Z" fill="#fff" stroke="#2f6fc0" strokeWidth="1.300" /><path d="M19 3V9H25" fill="#cfe0f4" stroke="#2f6fc0" /><circle cx="16" cy="17" r="6" fill="#4cb060" /><circle cx="16" cy="17" r="2.500" fill="#fff" /></Ic></RailItem>
          <RailItem $h={52}><Ic s={30}><circle cx="15" cy="15" r="12" fill="#e8f0fa" stroke="#666" strokeWidth="2.400" /><path d="M15 7V15H23" fill="none" stroke="#222" strokeWidth="1.800" /></Ic></RailItem>
          <RailItem $h={38}><Ic s={28}><defs><linearGradient id="rb" x1="0" y1="0" x2="0" y2="1"><stop offset="0" stopColor="#f22" /><stop offset="0.25" stopColor="#ff0" /><stop offset="0.5" stopColor="#2e4" /><stop offset="0.75" stopColor="#2cf" /><stop offset="1" stopColor="#22f" /></linearGradient></defs><rect x="0" y="2" width="14" height="24" fill="url(#rb)" /><path d="M15 8L26 25" stroke="#222" strokeWidth="2.400" /><path d="M14 1V9M10 5H18" stroke="#fff" strokeWidth="1.500" /></Ic></RailItem>
          <RailItem $h={42}><Ic s={28}><rect x="6" y="4" width="7" height="20" fill="#3f8fe0" /><path d="M6 8H13M6 13H13M6 18H13" stroke="#fff" strokeDasharray="2 1" /><path d="M5 24L10 26L15 24" stroke="#f0a020" strokeWidth="2" fill="none" /><path d="M16 8L25 24" stroke="#222" strokeWidth="2.200" /><path d="M14 6H28L18 12" fill="none" stroke="#3f8fe0" strokeWidth="1.400" /></Ic></RailItem>
          <RailItem $h={42}><Ic s={28}><path d="M15 6L24 3L26 7L20 9L17 20L13 19Z" fill="#888" stroke="#444" /><path d="M10 14L24 24" stroke="#99a" strokeWidth="3.500" /><circle cx="11" cy="21" r="4" fill="#999" stroke="#555" /><circle cx="10" cy="25" r="2.500" fill="#f08020" /></Ic></RailItem>
        </Rail>

        <Nav>
          <TreeBox>
            <TreeHead><HeadCell><span>名称</span></HeadCell><HeadCell><span>最新</span></HeadCell></TreeHead>
            <TreeRow $alt={false}><TreeMain><Guide $w={19} $x={9} $h={9}><Plus /></Guide><IconSlot $w={18}><IcModelView /></IconSlot><TreeText>模型视图</TreeText></TreeMain><div /></TreeRow>
            <TreeRow $alt><TreeMain><Guide $w={19} $x={9} $h={9}><Plus /></Guide><IconSlot $w={16}><CheckMark /></IconSlot><IconSlot $w={18}><IcCamera /></IconSlot><TreeText>摄像机</TreeText></TreeMain><div /></TreeRow>
            <TreeRow $alt={false}><TreeMain><Guide $w={19} $x={9} $h={10} /><IconSlot $w={18}><IcFolderExpr /></IconSlot><TreeText>用户表达式</TreeText></TreeMain><div /></TreeRow>
            <TreeRow $alt><TreeMain><Guide $w={19} $x={9} $end $h={9}><Expander /></Guide><IconSlot $w={18}><IcFolder /></IconSlot><TreeText>模型历史记录</TreeText></TreeMain><div /></TreeRow>
            {history.map((h, i) => (
              <TreeRow key={h.text + i} $alt={i % 2 === 1}>
                <TreeMain>
                  <Guide $w={40} $x={28} $h={11} $end={i === history.length - 1} />
                  <CheckBox><Ic s={11} v="0 0 14 14"><Tick /></Ic></CheckBox>
                  <IconSlot $w={18}>{h.icon}</IconSlot>
                  <TreeText $tone={h.tone} $bold={h.bold}>{h.text}</TreeText>
                </TreeMain>
                <TreeFlag><CheckMark /></TreeFlag>
              </TreeRow>
            ))}
            <TreeRow $alt><TreeMain /><div /></TreeRow>
            <TreeRow $alt={false}><TreeMain /><div /></TreeRow>
            <Hscroll><Arr d="M6 1L2 4L6 7" /><HThumb /><Arr d="M2 1L6 4L2 7" /></Hscroll>
          </TreeBox>
          <ThickRule $top={2} />
          <NavTitle $h={23}><span>相关性</span><Chevron /></NavTitle>
          <ThickRule />
          <DetailBox>
            <NavTitle $h={24}><span>细节</span><Chevron up /></NavTitle>
            <ParamTable>
              <ParamHead>
                <ParamHeadCell>参数</ParamHeadCell>
                <ParamHeadCell>值</ParamHeadCell>
                <ParamHeadCell>表达式<SortUp /></ParamHeadCell>
                <ParamHeadCell />
              </ParamHead>
              {Array.from({ length: 14 }, (_, i) => (
                <ParamRow key={i} $alt={i % 2 === 1}><ParamCell /><ParamCell /><ParamCell /><ParamCell /></ParamRow>
              ))}
            </ParamTable>
          </DetailBox>
          <NavTitle $h={23}><span>预览</span><Chevron /></NavTitle>
          <ThickRule />
        </Nav>

        <Dialog>
          <DialogInner>
            <DialogBody>
              <Sections>
                <Section $h={26}><CutBox><CutInner /></CutBox></Section>
                <Section>
                  <SectionTitle><span>交叉曲线</span><Chevron up /></SectionTitle>
                  <SectionBody $t={4}>
                    <Row $h={32}>
                      <LabelGroup><CheckMark /><span>选择曲线 (1)</span></LabelGroup>
                      <BtnPair><IconBtn $s={24}><IcCross /></IconBtn><IconBtn $s={32}><IcCurveRed /></IconBtn></BtnPair>
                    </Row>
                    <Row $h={32}><LabelGroup $dim><span>指定原始曲线</span></LabelGroup><IconBtn $s={32} $dim><IcCurveDim /></IconBtn></Row>
                    <Row $h={24}><LabelGroup $dim><span>添加新集</span></LabelGroup><IconBtn $s={24} $dim><IcAddSet /></IconBtn></Row>
                    <ListGroup>
                      <ListTitle><span>列表</span><Chevron up small /></ListTitle>
                      <ListWrap>
                        <ListTable>
                          <ListRow $sel><span>交叉曲线 1</span><span /></ListRow>
                          <ListRow $alt><span>交叉曲线 2</span><span /></ListRow>
                          <ListRow><span>新建</span><span /></ListRow>
                          <ListRow $alt><span /><span /></ListRow>
                        </ListTable>
                        <ListBtns>
                          <SmallBtn><IcX /></SmallBtn>
                          <SmallBtn $dim><IcUp /></SmallBtn>
                          <SmallBtn><IcDown /></SmallBtn>
                        </ListBtns>
                      </ListWrap>
                    </ListGroup>
                  </SectionBody>
                </Section>
                <Section>
                  <SectionTitle><span>连续性</span><Chevron up /></SectionTitle>
                  <SectionBody $t={2}>
                    <Row $h={23}><LabelGroup $plain><TickBox /><span>全部应用</span></LabelGroup></Row>
                    {continuity.map((c, i) => (
                      <React.Fragment key={c}>
                        <Row $h={25}><span>{c}</span><Select><span>G1（相切）</span></Select></Row>
                        <Row $h={32}>
                          <LabelGroup $on={i === 3}><CheckMark /><span>选择面 (1)</span></LabelGroup>
                          <IconBtn $s={32} $on={i === 3}><IcFace /></IconBtn>
                        </Row>
                      </React.Fragment>
                    ))}
                  </SectionBody>
                </Section>
                {closed.map(t => (
                  <Section key={t} $h={25}><SectionTitle $h={23}><span>{t}</span><Chevron /></SectionTitle></Section>
                ))}
              </Sections>
              <VScroll>
                <VEnd $h={186} $at="flex-start"><Arr d="M1 6L4 2L7 6" /></VEnd>
                <VThumb />
                <VEnd $h={13} $at="center"><Arr d="M1 2L4 6L7 2" /></VEnd>
              </VScroll>
            </DialogBody>
            <Footer>
              <Btn $primary>&lt; 确定 &gt;</Btn>
              <Btn>应用</Btn>
              <Btn>取消</Btn>
            </Footer>
          </DialogInner>
        </Dialog>

        <Viewport><SceneArt /></Viewport>
      </Main>

      <Toolbar>
        {tools.map((t, i) => {
          const w = t.w ?? 26;
          const ml = t.c - w / 2 - end;
          end = t.c + w / 2;
          return <ToolSlot key={i} $w={w} $ml={ml}>{t.n}</ToolSlot>;
        })}
      </Toolbar>

      <Alert>
        <Grip />
        <AlertCard>
          <AlertTitle>警报</AlertTitle>
          <AlertLine>
            <Ic s={16}><path d="M12 2L23 22H1Z" fill="#ffe64c" stroke="#b8a020" /><rect x="11" y="8" width="2" height="8" fill="#222" /><rect x="11" y="17" width="2" height="2" fill="#222" /></Ic>
            <span>无法达到 G0 连续。</span>
          </AlertLine>
          <AlertError>
            <ErrBadge><Ic s={17}><circle cx="12" cy="12" r="11" fill="#d80f1e" /><path d="M7 7L17 17M17 7L7 17" stroke="#fff" strokeWidth="3.500" /></Ic></ErrBadge>
            <ErrText>第一条主曲线和第一条交叉曲线的拐角未满足约束条件。</ErrText>
          </AlertError>
        </AlertCard>
        <CloseBtn><Ic s={16}><path d="M3 6L6 3L12 9L18 3L21 6L15 12L21 18L18 21L12 15L6 21L3 18L9 12Z" fill="#d81c28" /></Ic></CloseBtn>
      </Alert>
      <Watermark>UG爱好者论坛@冬冬叔叔</Watermark>
    </Root>
  );
};

export default App;
